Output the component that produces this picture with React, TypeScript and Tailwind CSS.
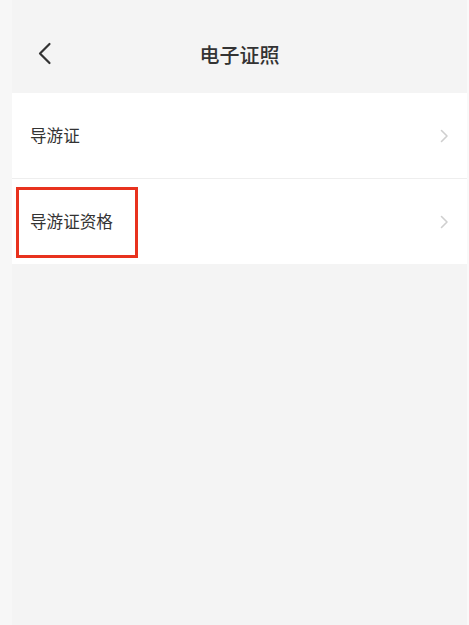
import React from "react";

const font = { fontFamily: '"Noto Sans CJK SC", "Noto Sans", sans-serif' };

function Chevron() {
  return (
    <svg width="10" height="16" viewBox="0 0 10 16" fill="none">
      <path d="M2.5 2.5 L8 8 L2.5 13.5" stroke="#cfcfcf" strokeWidth="1.6" strokeLinecap="round" strokeLinejoin="round" />
    </svg>
  );
}

export default function App() {
  return (
    <div className="flex h-[625px] w-[469px] bg-[#f4f4f4]" style={font}>
      <div className="w-[12px] bg-[#f7f7f7]" />
      <div className="flex w-[455px] flex-col">
        <div className="relative flex h-[93px] items-center justify-center">
          <svg className="absolute left-[25px] top-[42px]" width="16" height="24" viewBox="0 0 16 24" fill="none">
            <path d="M12.5 2 L3 11.5 L12.5 21" stroke="#333333" strokeWidth="2.2" strokeLinecap="round" strokeLinejoin="round" />
          </svg>
          <div className="mt-[16px] text-[20px] font-medium text-[#333333] leading-none">电子证照</div>
        </div>
        <div className="flex flex-col bg-white">
          <div className="flex h-[86px] items-center justify-between border-b border-[#eeeeee] pl-[18px] pr-[18px]">
            <span className="text-[16.6px] text-[#333333] leading-none">导游证</span>
            <Chevron />
          </div>
          <div className="relative flex h-[85px] items-center justify-between pl-[18px] pr-[18px]">
            <span className="text-[16.6px] text-[#333333] leading-none">导游证资格</span>
            <Chevron />
            <div className="absolute left-[4px] top-[8px] h-[71px] w-[122px] border-[3px] border-[#e8321e]" />
          </div>
        </div>
      </div>
      <div className="w-[2px] bg-[#f9f9f9]" />
    </div>
  );
}
